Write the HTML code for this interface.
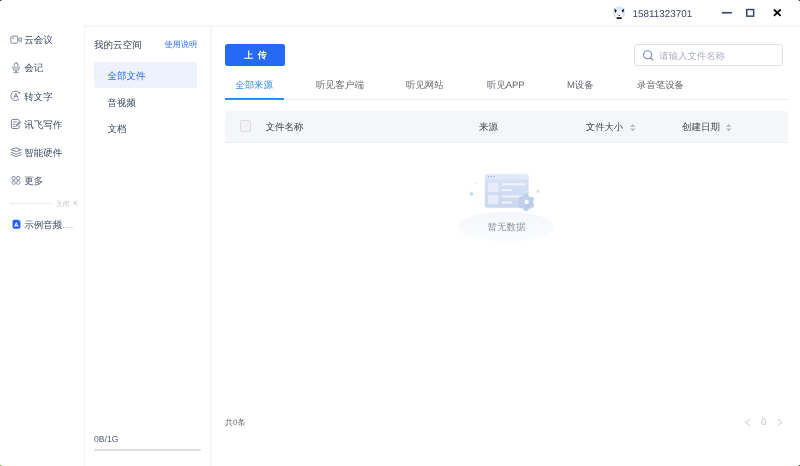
<!DOCTYPE html>
<html lang="zh">
<head>
<meta charset="utf-8">
<title>我的云空间</title>
<style>
*{margin:0;padding:0;box-sizing:border-box}
html,body{width:800px;height:466px;overflow:hidden;background:#fff}
body{text-rendering:geometricPrecision;-webkit-font-smoothing:antialiased;font-family:"Liberation Sans",sans-serif;color:#3c4864;position:relative;font-size:9.5px;line-height:1}
#app{position:absolute;left:0;top:0;width:800px;height:466px;overflow:hidden;will-change:transform}
.abs{position:absolute;white-space:nowrap}
.t{position:absolute;white-space:nowrap;line-height:12px;height:12px}
.corner{position:absolute;width:2.7px;height:2.3px;background:#1d2420}
/* frame lines */
#hline{left:84px;top:25px;width:716px;height:2px;background:#f8f8fa}
#panel{left:84.3px;top:25px;width:1.2px;height:441px;background:#f4f4f7}
#vdiv{left:210px;top:26px;width:2px;height:440px;background:#f5f5f8}
#wedge{left:85px;top:26px;width:4px;height:4px;background:#eaeff7}
#wedge i{display:block;width:4px;height:4px;background:#fff;border-top-left-radius:4px}
/* left nav */
.nav{left:24.2px;color:#3c4864;font-size:9.5px}
/* sub nav */
.sub{left:107.4px;color:#3c4864}
#sel{left:94px;top:61.7px;width:103px;height:26.5px;background:#edf2fe;border-radius:3px}
/* main */
#upload{left:225px;top:44px;width:60px;height:21.5px;background:#2569f5;border-radius:2.5px;color:#fff;font-weight:bold;font-size:9px;line-height:23.5px;text-align:center;word-spacing:2.2px;padding-left:1px}
#search{left:633.5px;top:44px;width:149.5px;height:21.8px;border:1px solid #dee1e8;border-radius:3px}
.tab{color:#65676c;font-size:9.4px}
#tabline{left:225px;top:99px;width:563px;height:1px;background:#eceef2}
#tabsel{left:225px;top:98px;width:59px;height:2px;background:#2d8cf0}
#thead{left:225px;top:110.5px;width:563px;height:31.3px;background:#f5f6f8;border-radius:4px}
#thline{left:225px;top:142px;width:563px;height:1px;background:#ebecef}
#chk{left:240.3px;top:120.4px;width:10.8px;height:11.2px;border:1px solid #dcdde1;border-radius:2px;background:#f2f2f4}
.th{color:#3f434b;font-size:9.5px}
</style>
</head>
<body>
<div id="app">
<!-- window corners -->
<div class="corner" style="left:-1px;top:-1px;border-radius:0 0 2.5px 0;background:#1b211d"></div>
<div class="corner" style="right:-1px;top:-1px;border-radius:0 0 0 2.5px;background:#294220"></div>
<div class="corner" style="left:-1px;bottom:-1px;border-radius:0 2.5px 0 0;background:#5f872a"></div>
<div class="corner" style="right:-1px;bottom:-1px;border-radius:2.5px 0 0 0;background:#25391f"></div>

<!-- title bar -->
<svg class="abs" id="avatar" style="left:609px;top:2px" width="20" height="20" viewBox="609 2 20 20">
<circle cx="619.1" cy="12.5" r="6.2" fill="#d7e9fb"/>
<ellipse cx="619.2" cy="13.6" rx="3.7" ry="3.9" fill="#fff"/>
<path d="M616 11.4 L619.2 9.2 L622.4 11.4 Z" fill="#fff"/>
<path d="M614.1 8.6 L616.9 10.5 L615.3 12.9 Z" fill="#0d1030"/>
<path d="M624.3 8.6 L621.5 10.5 L623.1 12.9 Z" fill="#0d1030"/>
<path d="M617.2 14.3 q0.7 0.7 1.4 0.2 M620 14.5 q0.7 0.5 1.4 -0.2" fill="none" stroke="#aeb4c4" stroke-width="0.5"/>
<ellipse cx="619.3" cy="15.5" rx="0.9" ry="0.6" fill="#2a2d4a"/>
<rect x="616.6" y="17.2" width="5.3" height="1.9" rx="0.9" fill="#0d1030"/>
</svg>
<div class="t" style="left:632.5px;top:9px;font-size:9.9px;color:#3c4864">15811323701</div>
<svg class="abs" style="left:715px;top:5px" width="75" height="16" viewBox="0 0 75 16">
<rect x="6.9" y="6.9" width="10" height="1.7" fill="#3f4b72"/>
<rect x="31.75" y="4.55" width="6.9" height="6.6" fill="none" stroke="#3b4870" stroke-width="1.5"/>
<path d="M58.9 4.5 L65.7 10.9 M65.7 4.5 L58.9 10.9" stroke="#0c0c0c" stroke-width="1.8" fill="none"/>
</svg>

<!-- frame -->
<div class="abs" id="hline"></div>
<div class="abs" id="panel"></div>
<div class="abs" id="vdiv"></div>
<div class="abs" id="wedge"><i></i></div>

<!-- left nav -->
<svg class="abs" style="left:0;top:0" width="84" height="240" viewBox="0 0 84 240">
<g fill="none" stroke="#78819b" stroke-width="1" stroke-linecap="round" stroke-linejoin="round">
<!-- camera -->
<path d="M14.3 36.1 H16.2 Q17.8 36.1 17.8 37.7 V41.6 Q17.8 43.2 16.2 43.2 H12.4 Q10.8 43.2 10.8 41.6 V37.7 Q10.8 36.1 12.4 36.1 Z"/>
<path d="M12.4 38.2h1.4" stroke-width="0.9"/>
<path d="M19 38.7 L21.3 37.6 V41.7 L19 40.6 Z" stroke-width="0.9"/>
<!-- mic -->
<rect x="14.2" y="62.8" width="3.7" height="5.4" rx="1.85"/>
<path d="M12.5 67.1 A3.55 3.3 0 0 0 19.6 67.1 M16.05 70.4 V72.2 M13.9 72.3 H18.2"/>
<!-- A circle -->
<path d="M19.2 92.7 A4.75 4.75 0 1 0 19 99.2"/>
<path d="M14 98 L15.9 93.4 L17.8 98 M14.8 96.4 H17" stroke-width="0.95"/>
<circle cx="19.6" cy="92.8" r="0.75" fill="#5d6784" stroke="none"/>
<!-- doc + pen -->
<path d="M19.2 121 V120.9 Q19.2 119.4 17.7 119.4 H12.9 Q11.4 119.4 11.4 120.9 V127 Q11.4 128.5 12.9 128.5 H17.7 Q19.2 128.5 19.2 127 V125.8"/>
<path d="M13.2 121.9 H16.6 M13.2 124.3 H15.1 M13.2 126.5 H15.1" stroke-width="0.9"/>
<path d="M16.3 125.8 L16.7 124.2 L19.7 121.2 L20.9 122.4 L17.9 125.4 Z" stroke-width="0.8" fill="#aab1c4"/>
<!-- layers -->
<path d="M16.2 148 L21.2 149.8 L16.2 151.6 L11.2 149.8 Z M11.2 152.3 L16.2 154.3 L21.2 152.3 M11.2 154.7 L16.2 156.6 L21.2 154.7" stroke-width="0.95"/>
<!-- more -->
<g stroke-width="0.85"><rect x="12.05" y="176.5" width="3.3" height="3.4" rx="1.35"/><rect x="16.5" y="176.5" width="3.3" height="3.4" rx="1.35"/><rect x="12.05" y="180.9" width="3.3" height="3.4" rx="1.35"/><rect x="16.5" y="180.9" width="3.3" height="3.4" rx="1.35"/></g>
</g>
<!-- sample audio -->
<rect x="12.6" y="219.8" width="7.8" height="9" rx="1.7" fill="#1f5ff5"/>
<path d="M14.6 226.9 L16.35 222.6 L18.1 226.9 M15.3 225.6 H17.4" fill="none" stroke="#fff" stroke-width="1"/>
<path d="M18.3 220.5 L19.8 220.5 L19.8 222" fill="none" stroke="#a9c4ff" stroke-width="0.7"/>
</svg>
<div class="t nav" style="top:35px">云会议</div>

<div class="t nav" style="top:63px">会记</div>

<div class="t nav" style="top:92px">转文字</div>

<div class="t nav" style="top:120px">讯飞写作</div>

<div class="t nav" style="top:148px">智能硬件</div>

<div class="t nav" style="top:176px">更多</div>

<div class="abs" style="left:9.5px;top:203px;width:41.5px;height:1px;background:#eaebef"></div>
<div class="t" style="left:56px;top:199px;font-size:6.8px;color:#c3c7d2">关闭<span style="margin-left:3px;font-size:9.5px;line-height:0;position:relative;top:0.4px">×</span></div>

<div class="t nav" style="top:220px">示例音频<span style="color:#9aa1b3;letter-spacing:0.1px">....</span></div>

<!-- sub nav -->
<div class="t" style="left:94px;top:40px;font-size:9.55px;color:#3a4052">我的云空间</div>
<div class="t" style="left:164.6px;top:39px;font-size:8.15px;color:#2a6cf4">使用说明</div>
<div class="abs" id="sel"></div>
<div class="t sub" style="top:71px;color:#2a6cf4">全部文件</div>
<div class="t sub" style="top:97px;transform:translateY(.5px)">音视频</div>
<div class="t sub" style="top:124px">文档</div>
<div class="t" style="left:94px;top:433px;font-size:8.6px;color:#55607a">0B/1G</div>
<div class="abs" style="left:94px;top:448.8px;width:107px;height:2.2px;background:#dbdee6;border-radius:1px"></div>

<!-- main -->
<div class="abs" id="upload">上 传</div>
<div class="abs" id="search"></div>
<svg class="abs" style="left:642px;top:49px" width="13" height="13" viewBox="642 49 13 13"><circle cx="647.6" cy="54.7" r="4" fill="none" stroke="#7c88a8" stroke-width="1.15"/><path d="M650.6 57.9 L652.7 60" stroke="#7c88a8" stroke-width="1.15" stroke-linecap="round"/></svg>
<div class="t" style="left:659.3px;top:50px;font-size:9.4px;color:#a9b0c0">请输入文件名称</div>

<div class="t tab" style="left:235.3px;top:79px;color:#2d8cf0">全部来源</div>
<div class="t tab" style="left:316px;top:80px;font-size:9.6px">听见客户端</div>
<div class="t tab" style="left:406px;top:79px">听见网站</div>
<div class="t tab" style="left:487px;top:79px">听见APP</div>
<div class="t tab" style="left:567px;top:79px">M设备</div>
<div class="t tab" style="left:637px;top:79px">录音笔设备</div>
<div class="abs" id="tabline"></div>
<div class="abs" id="tabsel"></div>

<div class="abs" id="thead"></div>
<div class="abs" id="thline"></div>
<div class="abs" id="chk"></div>
<div class="t th" style="left:265.6px;top:122px">文件名称</div>
<div class="t th" style="left:479px;top:122px">来源</div>
<div class="t th" style="left:585.8px;top:121px;font-size:9.35px">文件大小</div>
<svg class="abs" style="left:629px;top:122px" width="8" height="11" viewBox="629 122 8 11"><path d="M632.8 124 L635.5 126.8 H630.1 Z M630.1 128.4 H635.5 L632.8 131.2 Z" fill="#b5b8be"/></svg>
<div class="t th" style="left:682px;top:122px">创建日期</div>
<svg class="abs" style="left:725px;top:122px" width="8" height="11" viewBox="725 122 8 11"><path d="M728.7 124 L731.4 126.8 H726 Z M726 128.4 H731.4 L728.7 131.2 Z" fill="#b5b8be"/></svg>

<!-- empty state -->
<svg class="abs" style="left:446px;top:160px" width="120" height="90" viewBox="446 160 120 90">
<defs>
<linearGradient id="sh" x1="0" y1="0" x2="0" y2="1"><stop offset="0" stop-color="#f4f6fa"/><stop offset="0.5" stop-color="#f8f9fb"/><stop offset="1" stop-color="#fcfdfe"/></linearGradient>
<linearGradient id="card" x1="0" y1="0" x2="0" y2="1"><stop offset="0" stop-color="#d9e4f5"/><stop offset="1" stop-color="#c9d7ed"/></linearGradient>
<linearGradient id="gear" x1="0" y1="0" x2="1" y2="1"><stop offset="0" stop-color="#c6d5ee"/><stop offset="1" stop-color="#b3c6e6"/></linearGradient>
<filter id="gs" x="-30%" y="-30%" width="160%" height="160%"><feGaussianBlur stdDeviation="0.9"/></filter>
</defs>
<ellipse cx="506.5" cy="227" rx="47.7" ry="15.2" fill="url(#sh)"/>
<rect x="484.8" y="174.2" width="43.8" height="33.6" rx="2" fill="url(#card)"/>
<path d="M484.8 179.2 V176.2 Q484.8 174.2 486.8 174.2 H526.6 Q528.6 174.2 528.6 176.2 V179.2 Z" fill="#e1e9f7"/>
<circle cx="488.4" cy="176.8" r="0.75" fill="#8fb0ee"/><circle cx="491.3" cy="176.8" r="0.75" fill="#8fb0ee"/><circle cx="494.2" cy="176.8" r="0.75" fill="#8fb0ee"/>
<rect x="488" y="182.8" width="10.3" height="9.2" fill="#e7edf7"/>
<rect x="488" y="195" width="10.3" height="9.2" fill="#e7edf7"/>
<rect x="501.6" y="183.3" width="23.7" height="2" fill="#eef3fb"/>
<rect x="501.6" y="189.1" width="10.6" height="2" fill="#eef3fb"/>
<rect x="501.6" y="195.5" width="19.4" height="2" fill="#eef3fb"/>
<rect x="501.6" y="201.5" width="10.6" height="2" fill="#eef3fb"/>
<g transform="translate(526.3,203.4)" opacity="0.45" filter="url(#gs)"><circle r="7" fill="#9fb4da"/></g>
<g transform="translate(526.3,202.3)"><circle r="6.5" fill="url(#gear)"/><g fill="#bccce9"><rect x="-1.9" y="-8.4" width="3.8" height="16.8" rx="1"/><rect x="-1.9" y="-8.4" width="3.8" height="16.8" rx="1" transform="rotate(60)"/><rect x="-1.9" y="-8.4" width="3.8" height="16.8" rx="1" transform="rotate(120)"/></g><circle r="5.6" fill="url(#gear)"/><circle cx="0.3" cy="-0.3" r="2.2" fill="#f6f8fc"/></g>
<path d="M469.3 193.8 l2.2 -2.4 l2.2 2.4 l-2.2 2.4 z" fill="#c3d9f8"/>
<path d="M536.2 191.4 l1.6 -1.9 l1.6 1.9 l-1.6 1.9 z" fill="#cfe0f9"/>
<path d="M475.4 183.4 l1 -1.2 l1 1.2 l-1 1.2 z" fill="#d3e3fa"/>
<path d="M479.2 203.8 l0.8 -0.9 l0.8 0.9 l-0.8 0.9 z" fill="#dde9fb"/>
</svg>
<div class="t" style="left:487.6px;top:222px;font-size:9.5px;color:#8b909c">暂无数据</div>

<!-- footer -->
<div class="t" style="left:225px;top:417px;font-size:8px;color:#606266">共0条</div>
<svg class="abs" style="left:742px;top:415px" width="46" height="14" viewBox="0 0 46 14"><path d="M7.6 4.3 L3.8 7.4 L7.6 10.5" fill="none" stroke="#c4c5c9" stroke-width="1"/><path d="M36.1 4.3 L39.9 7.4 L36.1 10.5" fill="none" stroke="#c4c5c9" stroke-width="1"/></svg>
<div class="t" style="left:761px;top:416.5px;font-size:9.6px;color:#c3c4c8">0</div>
</div>
</body>
</html>
